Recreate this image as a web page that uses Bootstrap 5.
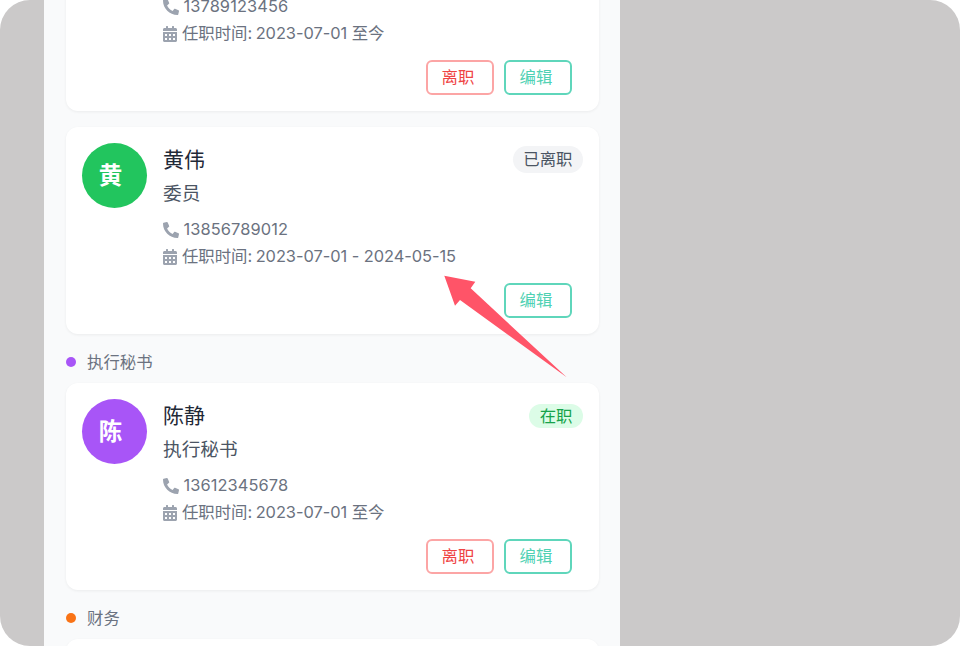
<!DOCTYPE html>
<html lang="zh-CN">
<head>
  <meta charset="UTF-8">
  <title>人员列表</title>
  <link href="https://cdn.jsdelivr.net/npm/bootstrap@5.3.0/dist/css/bootstrap.min.css" rel="stylesheet">
  <style>
    html, body { height: 100%; }
    body {
      background: #fff;
      overflow: hidden;
      font-family: "Inter", "Noto Sans CJK SC", sans-serif;
    }
    .stage {
      height: 646px;
      background: #cbc9c9;
      border-radius: 30px;
      overflow: hidden;
      position: relative;
    }
    .phone-col {
      display: flow-root;
      width: 576px;
      margin-left: 44px;
      height: 646px;
      background: #f9fafb;
      padding: 0 21px 0 22px;
      overflow: hidden;
    }
    .staff-card {
      border: 0;
      border-radius: 12px;
      background: #fff;
      box-shadow: 0 1px 3px rgba(0, 0, 0, .06);
      padding: 16px;
      height: 207px;
      margin-bottom: 16px;
    }
    .staff-card.cut { margin-top: -96px; }
    .staff-card.last { margin-bottom: 0; }
    .avatar {
      width: 65px;
      height: 65px;
      flex: none;
      font-size: 23.5px;
      font-weight: 700;
      color: #fff;
      padding-right: 8px;
    }
    .avatar-gap { width: 65px; flex: none; }
    .cut-gap { height: 68px; }
    .bg-green { background: #22c55e; }
    .bg-purple { background: #a855f7; }
    .staff-name { font-size: 21px; line-height: 34px; color: #1f2937; font-weight: 400; margin: 0; }
    .staff-role { font-size: 18.7px; line-height: 34px; color: #4b5563; margin: 0; }
    .info-row {
      font-size: 16.4px;
      line-height: 27px;
      color: #6b7280;
    }
    .info-row svg { height: 16px; fill: #9ca3af; flex: none; margin-left: -.5px; }
    .ic-phone { width: 16px; transform: scaleX(-1); margin-right: 5px; }
    .ic-cal { width: 14px; margin-right: 5.5px; }
    .tel-no { letter-spacing: .1px; }
    .time-text { white-space: pre; letter-spacing: -.04px; }
    .time-label { word-spacing: -1px; }
    .contact { margin-top: 5px; }
    .state {
      font-size: 16.4px;
      font-weight: 400;
      line-height: 27px;
      padding: 0 10.5px;
    }
    .state.off { background: #f3f4f6; color: #4b5563; margin-top: 3px; }
    .state.on { background: #dcfce7; color: #16a34a; line-height: 24px; margin-top: 5px; }
    .action-row { gap: 10px; margin-right: 11px; margin-top: 13px; }
    .act-btn {
      width: 68px;
      height: 35px;
      padding: 0 4px 0 0;
      font-size: 16.4px;
      line-height: 31px;
      border-width: 2px;
      border-radius: 6px;
      background: #fff;
    }
    .act-leave { border-color: #fca5a5; color: #ef4444; }
    .act-edit { border-color: #5fd6bb; color: #4fd1b3; }
    .group-title {
      height: 49px;
      margin-top: -16px;
      padding-top: 6px;
      font-size: 16.4px;
      color: #6b7280;
      gap: 11px;
      line-height: 42px;
    }
    .group-dot { width: 10px; height: 10px; flex: none; }
    .dot-orange { background: #f97316; }
    .pointer { position: absolute; left: 0; top: 0; width: 960px; height: 646px; pointer-events: none; }
  </style>
</head>
<body>
  <div class="stage">
    <div class="phone-col">

      <div class="card staff-card cut flex-row gap-3">
        <div class="avatar-gap"></div>
        <div class="flex-grow-1">
          <div class="cut-gap"></div>
          <div class="info-row contact d-flex align-items-center">
            <svg class="ic-phone" viewBox="0 0 512 512"><path d="M493.4 24.6l-104-24c-11.3-2.6-22.9 3.3-27.5 13.9l-48 112c-4.2 9.8-1.4 21.3 6.9 28l60.6 49.6c-36 76.7-98.9 140.5-177.2 177.2l-49.6-60.6c-6.8-8.3-18.2-11.1-28-6.9l-112 48C3.9 366.5-2 378.1.6 389.4l24 104C27.1 504.2 36.7 512 48 512c256.1 0 464-207.5 464-464 0-11.2-7.7-20.9-18.6-23.4z"/></svg>
            <span class="tel-no">13789123456</span>
          </div>
          <div class="info-row d-flex align-items-center">
            <svg class="ic-cal" viewBox="0 0 448 512"><path d="M0 464c0 26.5 21.5 48 48 48h352c26.5 0 48-21.5 48-48V192H0v272zm320-196c0-6.6 5.4-12 12-12h40c6.6 0 12 5.4 12 12v40c0 6.6-5.4 12-12 12h-40c-6.6 0-12-5.4-12-12v-40zm0 128c0-6.6 5.4-12 12-12h40c6.6 0 12 5.4 12 12v40c0 6.6-5.4 12-12 12h-40c-6.6 0-12-5.4-12-12v-40zM192 268c0-6.6 5.4-12 12-12h40c6.6 0 12 5.4 12 12v40c0 6.6-5.4 12-12 12h-40c-6.6 0-12-5.4-12-12v-40zm0 128c0-6.6 5.4-12 12-12h40c6.6 0 12 5.4 12 12v40c0 6.6-5.4 12-12 12h-40c-6.6 0-12-5.4-12-12v-40zM64 268c0-6.6 5.4-12 12-12h40c6.6 0 12 5.4 12 12v40c0 6.6-5.4 12-12 12H76c-6.6 0-12-5.4-12-12v-40zm0 128c0-6.6 5.4-12 12-12h40c6.6 0 12 5.4 12 12v40c0 6.6-5.4 12-12 12H76c-6.6 0-12-5.4-12-12v-40zM400 64h-48V16c0-8.8-7.2-16-16-16h-32c-8.8 0-16 7.2-16 16v48H160V16c0-8.8-7.2-16-16-16h-32c-8.8 0-16 7.2-16 16v48H48C21.5 64 0 85.5 0 112v48h448v-48c0-26.5-21.5-48-48-48z"/></svg>
            <span class="time-text"><span class="time-label">任职时间: </span>2023-07-01 至今</span>
          </div>
          <div class="action-row d-flex justify-content-end">
            <button class="btn act-btn act-leave">离职</button>
            <button class="btn act-btn act-edit">编辑</button>
          </div>
        </div>
      </div>

      <div class="card staff-card flex-row gap-3">
        <div class="avatar rounded-circle bg-green d-flex align-items-center justify-content-center">黄</div>
        <div class="flex-grow-1">
          <div class="d-flex justify-content-between align-items-start">
            <div>
              <h3 class="staff-name">黄伟</h3>
              <p class="staff-role">委员</p>
            </div>
            <span class="badge rounded-pill state off">已离职</span>
          </div>
          <div class="info-row contact d-flex align-items-center">
            <svg class="ic-phone" viewBox="0 0 512 512"><path d="M493.4 24.6l-104-24c-11.3-2.6-22.9 3.3-27.5 13.9l-48 112c-4.2 9.8-1.4 21.3 6.9 28l60.6 49.6c-36 76.7-98.9 140.5-177.2 177.2l-49.6-60.6c-6.8-8.3-18.2-11.1-28-6.9l-112 48C3.9 366.5-2 378.1.6 389.4l24 104C27.1 504.2 36.7 512 48 512c256.1 0 464-207.5 464-464 0-11.2-7.7-20.9-18.6-23.4z"/></svg>
            <span class="tel-no">13856789012</span>
          </div>
          <div class="info-row d-flex align-items-center">
            <svg class="ic-cal" viewBox="0 0 448 512"><path d="M0 464c0 26.5 21.5 48 48 48h352c26.5 0 48-21.5 48-48V192H0v272zm320-196c0-6.6 5.4-12 12-12h40c6.6 0 12 5.4 12 12v40c0 6.6-5.4 12-12 12h-40c-6.6 0-12-5.4-12-12v-40zm0 128c0-6.6 5.4-12 12-12h40c6.6 0 12 5.4 12 12v40c0 6.6-5.4 12-12 12h-40c-6.6 0-12-5.4-12-12v-40zM192 268c0-6.6 5.4-12 12-12h40c6.6 0 12 5.4 12 12v40c0 6.6-5.4 12-12 12h-40c-6.6 0-12-5.4-12-12v-40zm0 128c0-6.6 5.4-12 12-12h40c6.6 0 12 5.4 12 12v40c0 6.6-5.4 12-12 12h-40c-6.6 0-12-5.4-12-12v-40zM64 268c0-6.6 5.4-12 12-12h40c6.6 0 12 5.4 12 12v40c0 6.6-5.4 12-12 12H76c-6.6 0-12-5.4-12-12v-40zm0 128c0-6.6 5.4-12 12-12h40c6.6 0 12 5.4 12 12v40c0 6.6-5.4 12-12 12H76c-6.6 0-12-5.4-12-12v-40zM400 64h-48V16c0-8.8-7.2-16-16-16h-32c-8.8 0-16 7.2-16 16v48H160V16c0-8.8-7.2-16-16-16h-32c-8.8 0-16 7.2-16 16v48H48C21.5 64 0 85.5 0 112v48h448v-48c0-26.5-21.5-48-48-48z"/></svg>
            <span class="time-text"><span class="time-label">任职时间: </span>2023-07-01 - 2024-05-15</span>
          </div>
          <div class="action-row d-flex justify-content-end">
            <button class="btn act-btn act-edit">编辑</button>
          </div>
        </div>
      </div>

      <div class="group-title d-flex align-items-center">
        <span class="group-dot rounded-circle bg-purple"></span>
        <span>执行秘书</span>
      </div>

      <div class="card staff-card flex-row gap-3">
        <div class="avatar rounded-circle bg-purple d-flex align-items-center justify-content-center">陈</div>
        <div class="flex-grow-1">
          <div class="d-flex justify-content-between align-items-start">
            <div>
              <h3 class="staff-name">陈静</h3>
              <p class="staff-role">执行秘书</p>
            </div>
            <span class="badge rounded-pill state on">在职</span>
          </div>
          <div class="info-row contact d-flex align-items-center">
            <svg class="ic-phone" viewBox="0 0 512 512"><path d="M493.4 24.6l-104-24c-11.3-2.6-22.9 3.3-27.5 13.9l-48 112c-4.2 9.8-1.4 21.3 6.9 28l60.6 49.6c-36 76.7-98.9 140.5-177.2 177.2l-49.6-60.6c-6.8-8.3-18.2-11.1-28-6.9l-112 48C3.9 366.5-2 378.1.6 389.4l24 104C27.1 504.2 36.7 512 48 512c256.1 0 464-207.5 464-464 0-11.2-7.7-20.9-18.6-23.4z"/></svg>
            <span class="tel-no">13612345678</span>
          </div>
          <div class="info-row d-flex align-items-center">
            <svg class="ic-cal" viewBox="0 0 448 512"><path d="M0 464c0 26.5 21.5 48 48 48h352c26.5 0 48-21.5 48-48V192H0v272zm320-196c0-6.6 5.4-12 12-12h40c6.6 0 12 5.4 12 12v40c0 6.6-5.4 12-12 12h-40c-6.6 0-12-5.4-12-12v-40zm0 128c0-6.6 5.4-12 12-12h40c6.6 0 12 5.4 12 12v40c0 6.6-5.4 12-12 12h-40c-6.6 0-12-5.4-12-12v-40zM192 268c0-6.6 5.4-12 12-12h40c6.6 0 12 5.4 12 12v40c0 6.6-5.4 12-12 12h-40c-6.6 0-12-5.4-12-12v-40zm0 128c0-6.6 5.4-12 12-12h40c6.6 0 12 5.4 12 12v40c0 6.6-5.4 12-12 12h-40c-6.6 0-12-5.4-12-12v-40zM64 268c0-6.6 5.4-12 12-12h40c6.6 0 12 5.4 12 12v40c0 6.6-5.4 12-12 12H76c-6.6 0-12-5.4-12-12v-40zm0 128c0-6.6 5.4-12 12-12h40c6.6 0 12 5.4 12 12v40c0 6.6-5.4 12-12 12H76c-6.6 0-12-5.4-12-12v-40zM400 64h-48V16c0-8.8-7.2-16-16-16h-32c-8.8 0-16 7.2-16 16v48H160V16c0-8.8-7.2-16-16-16h-32c-8.8 0-16 7.2-16 16v48H48C21.5 64 0 85.5 0 112v48h448v-48c0-26.5-21.5-48-48-48z"/></svg>
            <span class="time-text"><span class="time-label">任职时间: </span>2023-07-01 至今</span>
          </div>
          <div class="action-row d-flex justify-content-end">
            <button class="btn act-btn act-leave">离职</button>
            <button class="btn act-btn act-edit">编辑</button>
          </div>
        </div>
      </div>

      <div class="group-title d-flex align-items-center">
        <span class="group-dot rounded-circle dot-orange"></span>
        <span>财务</span>
      </div>

      <div class="card staff-card last"></div>
    </div>

    <!-- callout arrow over the list -->
    <svg class="pointer" viewBox="0 0 960 646">
      <polygon points="444.3,275.7 475.3,281.7 470.7,288.3 566.7,377.3 460,300 455,305.7" fill="#ff5468"/>
    </svg>
  </div>
  <script src="https://cdn.jsdelivr.net/npm/bootstrap@5.3.0/dist/js/bootstrap.bundle.min.js"></script>
</body>
</html>
